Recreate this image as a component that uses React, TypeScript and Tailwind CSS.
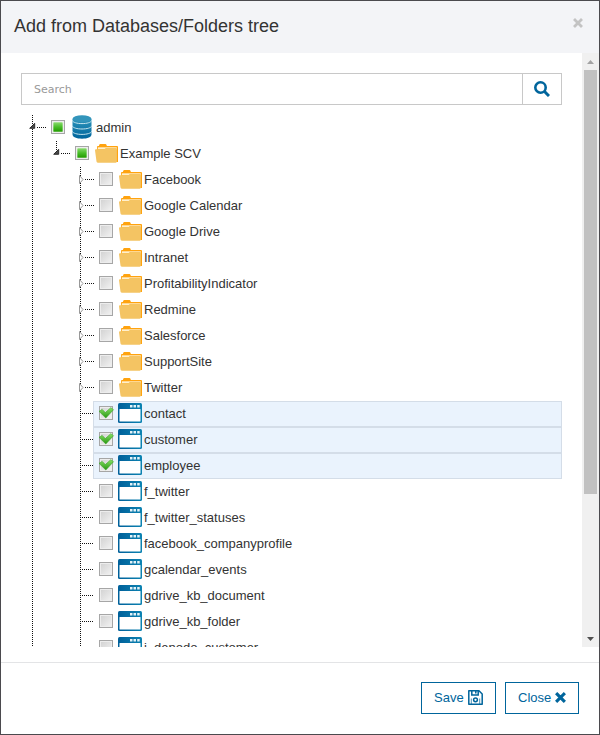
import React from "react";

type Check = "off" | "on" | "partial";
type Kind = "database" | "folder" | "view";
type Node = { label: string; kind: Kind; check: Check; level: number };

const folders = ["Facebook", "Google Calendar", "Google Drive", "Intranet", "ProfitabilityIndicator", "Redmine", "Salesforce", "SupportSite", "Twitter"];
const selectedViews = ["contact", "customer", "employee"];
const otherViews = ["f_twitter", "f_twitter_statuses", "facebook_companyprofile", "gcalendar_events", "gdrive_kb_document", "gdrive_kb_folder", "i_denodo_customer"];

const nodes: Node[] = [
  { label: "admin", kind: "database", check: "partial", level: 0 },
  { label: "Example SCV", kind: "folder", check: "partial", level: 1 },
  ...folders.map((label): Node => ({ label, kind: "folder", check: "off", level: 2 })),
  ...selectedViews.map((label): Node => ({ label, kind: "view", check: "on", level: 2 })),
  ...otherViews.map((label): Node => ({ label, kind: "view", check: "off", level: 2 })),
];

function Dots({ x1, y1, x2, y2 }: { x1: number; y1: number; x2: number; y2: number }) {
  return <line x1={x1} y1={y1} x2={x2} y2={y2} stroke="#111" strokeDasharray="1 1" />;
}

/* Connector lines and the expander arrow in front of a row. */
function Guides({ node }: { node: Node }) {
  const x = 11.5 + node.level * 24;
  return (
    <svg width={x + 12.5} height="26" shapeRendering="crispEdges" className="shrink-0 overflow-visible">
      <Dots x1={11.5} y1={0} x2={11.5} y2={26} />
      {node.level === 1 && <Dots x1={x} y1={0} x2={x} y2={12} />}
      {node.level === 2 && <Dots x1={x} y1={0} x2={x} y2={26} />}
      <Dots x1={x + (node.kind === "view" ? 1.5 : 4.5)} y1={12.5} x2={x + 13} y2={12.5} />
      {node.level < 2 && (
        <path d={`M${x + 2.2} 8.3v5h-5z`} fill="#4a4a4a" stroke="#222" strokeWidth="0.9" strokeLinejoin="round" shapeRendering="auto" />
      )}
      {node.level === 2 && node.kind === "folder" && (
        <path d={`M${x - 1} 8.5v8l3.500-4z`} fill="#fff" stroke="#989898" strokeWidth="1" strokeLinejoin="round" shapeRendering="auto" />
      )}
    </svg>
  );
}

function Checkbox({ state }: { state: Check }) {
  return (
    <svg width="15" height="14" viewBox="0 0 15 14" className="shrink-0 overflow-visible">
      <rect x="0.5" y="0.5" width="13" height="13" fill={state === "partial" ? "#fff" : "url(#boxFill)"} stroke="#a6a6a6" />
      <rect x="1.5" y="1.5" width="11" height="11" fill="none" stroke="#ededed" />
      {state === "partial" && <rect x="2.300" y="2.300" width="9.400" height="9.400" rx="0.500" fill="url(#greenFill)" />}
      {state === "on" && (
        <path d="M0 5.300 3.200 3.400 6.300 6.600 11.800 1.700 14.500 3.700 6.800 12Z" fill="url(#tickFill)" stroke="#36a524" strokeWidth="0.600" strokeLinejoin="round" />
      )}
    </svg>
  );
}

function NodeIcon({ kind }: { kind: Kind }) {
  if (kind === "database")
    return (
      <svg width="20" height="24" viewBox="0 0 20 24" className="ml-[6px] shrink-0">
        <path d="M0.500 4v15.500c0 2.400 4 4.200 9.500 4.200s9.500-1.800 9.500-4.200V4z" fill="url(#dbFill)" />
        <ellipse cx="10" cy="3.800" rx="9.500" ry="3.600" fill="#3395bb" />
        <path d="M0 5.300c1 2.200 5 3.300 10 3.300s9-1.100 10-3.300M0 10.700c1 2.200 5 3.300 10 3.300s9-1.100 10-3.300M0 16.100c1 2.200 5 3.300 10 3.300s9-1.100 10-3.300" fill="none" stroke="#c3e4ee" strokeWidth="1" />
      </svg>
    );
  if (kind === "folder")
    return (
      <svg width="24" height="20" viewBox="0 0 24 20" className="ml-[4px] shrink-0">
        <path d="M3 18V3q0-.9.900-.9h1L5.300.8Q5.500.1 6.200.1h5.300q.7 0 .9.700l.5 1.300h10.200q.9 0 .9.900v15z" fill="#ffa30f" />
        <path d="M3.800 3.300h19v2h-19z" fill="#fff0cd" />
        <path d="M1 6.200Q.9 5.200 2 5.200h8.500l1.200-1.100h10.200q1 0 1 1V17.600q0 1.100-1.100 1.100H3.800q-1.200 0-1.300-1.100z" fill="#f4c463" />
      </svg>
    );
  return (
    <svg width="24" height="20" viewBox="0 0 24 20" className="-mt-px ml-[4px] mb-px shrink-0">
      <rect width="24" height="20" rx="1.500" fill="url(#windowFill)" />
      <rect x="1.500" y="6" width="21" height="12.500" rx="0.500" fill="#fff" />
      <path d="M12 2h2.500v2.500H12zM15.500 2h2.500v2.500h-2.500zM19.200 2h2.500v2.500h-2.500z" fill="#e3f2f8" />
    </svg>
  );
}

function TreeRow({ node }: { node: Node }) {
  const iconOffset = node.kind === "database" ? "-mt-[2px]" : "-mt-[1px]";
  return (
    <div className="flex h-[26px] shrink-0">
      <Guides node={node} />
      <div className={`flex min-w-0 flex-1 items-center border ${node.check === "on" ? "border-[#d4dde8] bg-[#eaf3fd]" : "border-transparent"}`}>
        <div className="-mt-[2px] ml-[5px] flex shrink-0">
          <Checkbox state={node.check} />
        </div>
        <div className={`flex shrink-0 ${iconOffset}`}>
          <NodeIcon kind={node.kind} />
        </div>
        <span className={`${node.kind === "database" ? "ml-[4px]" : "ml-[2px]"} whitespace-nowrap text-[13px] leading-[24px] text-[#333]`}>{node.label}</span>
      </div>
    </div>
  );
}

function GradientDefs() {
  return (
    <svg width="0" height="0" className="absolute">
      <defs>
        <linearGradient id="boxFill" x1="0" y1="0" x2="1" y2="1"><stop stopColor="#cfcfcf" /><stop offset="1" stopColor="#f4f4f4" /></linearGradient>
        <linearGradient id="greenFill" x1="0" y1="0" x2="0" y2="1"><stop stopColor="#8ad96f" /><stop offset=".5" stopColor="#48bd28" /><stop offset="1" stopColor="#229a00" /></linearGradient>
        <linearGradient id="tickFill" x1="0" y1="0" x2="0" y2="1"><stop stopColor="#8ae267" /><stop offset="1" stopColor="#259510" /></linearGradient>
        <linearGradient id="dbFill" x1="0" y1="0" x2="0" y2="1"><stop stopColor="#2b93ba" /><stop offset="1" stopColor="#00659c" /></linearGradient>
        <linearGradient id="windowFill" x1="0" y1="0" x2="1" y2="0"><stop stopColor="#00609a" /><stop offset="1" stopColor="#0c83b2" /></linearGradient>
      </defs>
    </svg>
  );
}

function Cross({ size, className }: { size: number; className: string }) {
  return (
    <svg width={size} height={size} viewBox="0 0 10 10" className={className}>
      <path d="M2 2l6 6M8 2l-6 6" stroke="currentColor" strokeWidth="2.800" strokeLinecap="square" />
    </svg>
  );
}

export default function App() {
  return (
    <div className="flex h-[735px] w-[600px] flex-col overflow-hidden border border-[#4b4a4e] bg-white font-['Liberation_Sans',Arial,sans-serif]">
      <GradientDefs />
      <header className="flex h-[52px] shrink-0 items-center justify-between bg-[#f3f4f7] pl-[13px] pr-[16px]">
        <h1 className="text-[18px] leading-[24px] -mt-[2px] text-[#333]">Add from Databases/Folders tree</h1>
        <Cross size={10} className="mb-[8px] text-[#c3c3c3]" />
      </header>
      <div className="flex h-[594px] shrink-0">
        <main className="flex min-w-0 flex-1 flex-col overflow-hidden pl-[20px] pr-[20px] pt-[20px]">
          <div className="flex h-[32px] shrink-0 border border-[#c8c8c8]">
            <div className="flex flex-1 items-center pl-[12px] pt-[3px] font-['DejaVu_Sans',sans-serif] text-[11px] text-[#999]">Search</div>
            <button className="flex w-[39px] items-center justify-center border-l border-[#c8c8c8] text-[#00659c]" aria-label="Search">
              <svg width="16" height="16" viewBox="0 0 16 16" fill="none" stroke="currentColor">
                <circle cx="6.500" cy="6.500" r="5.200" strokeWidth="2.600" />
                <path d="M10.500 10.500l4.500 4.500" strokeWidth="3" />
              </svg>
            </button>
          </div>
          <div className="mt-[10px] flex min-h-0 flex-1 flex-col overflow-hidden">
            {nodes.map((node) => <TreeRow key={node.label} node={node} />)}
          </div>
        </main>
        <div className="flex w-[17px] shrink-0 flex-col items-center bg-[#f0f0f0]">
          <div className="flex h-[17px] shrink-0 items-center">
            <svg width="7" height="4" className="mt-px"><path d="M3.500 0 7 4H0z" fill="#a3a3a3" /></svg>
          </div>
          <div className="h-[424px] w-[13px] bg-[#c1c1c1]" />
          <div className="mt-auto flex h-[17px] items-center">
            <svg width="7" height="4"><path d="M0 0h7L3.500 4z" fill="#505050" /></svg>
          </div>
        </div>
      </div>
      <div className="mt-[15px] h-px shrink-0 bg-[#e3e4e6]" />
      <footer className="flex justify-end gap-[9px] pr-[20px] pt-[19px] text-[13px] text-[#00659c]">
        <button className="flex h-[32px] w-[75px] items-center border border-[#00659c] pl-[12px]">
          <span className="-mt-px">Save</span>
          <svg width="15" height="15" viewBox="0 0 15 15" fill="none" stroke="currentColor" strokeWidth="1.500" className="-mt-px ml-[4px]">
            <path d="M.8.8H11l3.200 3.200v10.200H.8z" strokeLinejoin="round" />
            <path d="M3.800 1v4h6.400V1M7.800 1v2.500" />
            <circle cx="7.500" cy="9.800" r="1.900" />
            <path d="M3.300 14V8.500M11.700 14V8.500" strokeWidth=".7" />
          </svg>
        </button>
        <button className="flex h-[32px] w-[74px] items-center border border-[#00659c] pl-[12px]">
          <span className="-mt-px">Close</span>
          <Cross size={11} className="-mt-px ml-[4px]" />
        </button>
      </footer>
    </div>
  );
}
